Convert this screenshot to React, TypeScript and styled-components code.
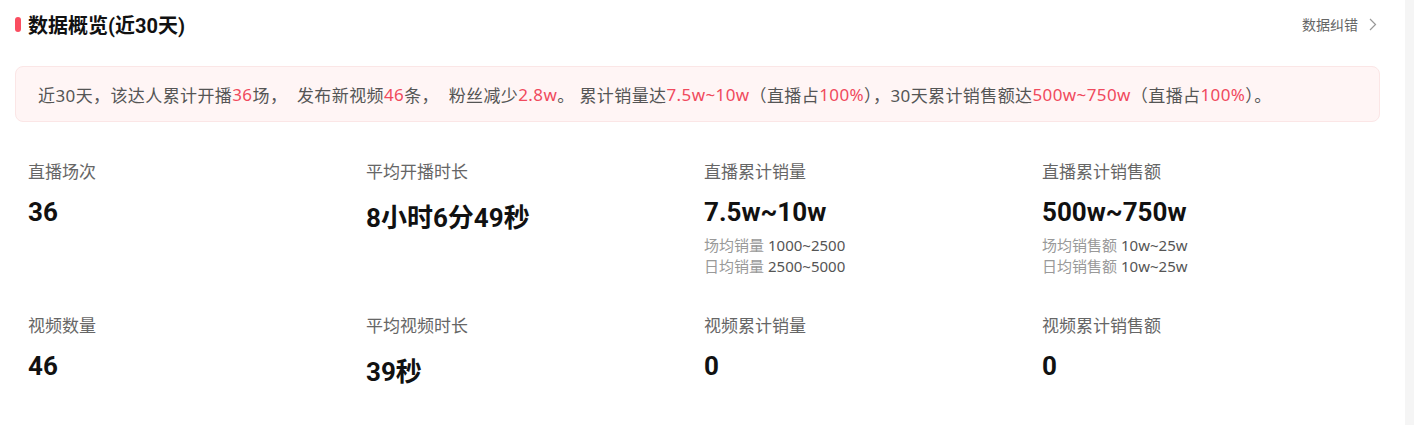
import styled, { createGlobalStyle } from "styled-components";

const GlobalStyle = createGlobalStyle`
    body {
        margin: 0;
        background: #ffffff;
        font-family: "Noto Sans", "Noto Sans CJK SC", sans-serif;
    }
`;

const StyledPage = styled.div`
    display: flex;
    width: 100%;
    height: 425px;
    overflow: hidden;
`;
const StyledMain = styled.div`
    flex: 1;
    padding: 0 25px 0 15px;
    background: #ffffff;
`;
const StyledSideStrip = styled.div`
    width: 11px;
    background: #f5f5f5;
`;
const StyledHeader = styled.div`
    display: flex;
    align-items: center;
    justify-content: space-between;
    height: 48px;
`;
const StyledTitle = styled.div`
    display: flex;
    align-items: center;
    gap: 7px;
    font-family: Roboto, "Noto Sans CJK SC", sans-serif;
    font-size: 20px;
    font-weight: 700;
    color: #111111;
    &:before {
        content: "";
        width: 6px;
        height: 15px;
        border-radius: 3px;
        background-color: #fa4d60;
    }
`;
const StyledCorrect = styled.div`
    display: flex;
    align-items: center;
    gap: 11px;
    margin-right: 3px;
    font-size: 14px;
    color: #666666;
    cursor: pointer;
`;
const StyledBanner = styled.div`
    margin-top: 18px;
    height: 56px;
    display: flex;
    align-items: center;
    padding: 0 22px;
    box-sizing: border-box;
    border: 1px solid #fbe6e6;
    border-radius: 8px;
    background-color: #fff5f5;
    font-size: 17px;
    letter-spacing: 0.4px;
    color: #555555;
    white-space: pre;
`;
const StyledHighlight = styled.span`
    color: #f04a5d;
`;
const StyledGrid = styled.div`
    display: grid;
    grid-template-columns: repeat(4, 338px);
    row-gap: 39px;
    margin-top: 40px;
    padding-left: 13px;
`;
const StyledCell = styled.div`
    display: flex;
    flex-direction: column;
`;
const StyledLabel = styled.div`
    font-size: 17px;
    line-height: 20px;
    color: #666666;
`;
const StyledValue = styled.div`
    margin-top: 15px;
    font-family: Roboto, "Noto Sans CJK SC", sans-serif;
    font-size: 26px;
    font-weight: 700;
    color: #111111;
`;
const StyledSubList = styled.div`
    margin-top: 8px;
    display: flex;
    flex-direction: column;
`;
const StyledSubLine = styled.div`
    font-size: 15px;
    line-height: 21px;
    color: #555555;
    & span {
        color: #999999;
        margin-right: 4px;
    }
`;

type Metric = {
    label: string;
    value: string;
    subs?: [string, string][];
};

const metrics: Metric[] = [
    { label: "直播场次", value: "36" },
    { label: "平均开播时长", value: "8小时6分49秒" },
    {
        label: "直播累计销量",
        value: "7.5w~10w",
        subs: [
            ["场均销量", "1000~2500"],
            ["日均销量", "2500~5000"],
        ],
    },
    {
        label: "直播累计销售额",
        value: "500w~750w",
        subs: [
            ["场均销售额", "10w~25w"],
            ["日均销售额", "10w~25w"],
        ],
    },
    { label: "视频数量", value: "46" },
    { label: "平均视频时长", value: "39秒" },
    { label: "视频累计销量", value: "0" },
    { label: "视频累计销售额", value: "0" },
];

const App = () => {
    return (
        <StyledPage>
            <GlobalStyle />
            <StyledMain>
                <StyledHeader>
                    <StyledTitle>数据概览(近30天)</StyledTitle>
                    <StyledCorrect>
                        数据纠错
                        <svg width="8" height="13" viewBox="0 0 8 13">
                            <path d="M1 1l5.5 5.5L1 12" fill="none" stroke="#999" strokeWidth="1.2" />
                        </svg>
                    </StyledCorrect>
                </StyledHeader>
                <StyledBanner>
                    {"近30天，该达人累计开播"}
                    <StyledHighlight>36</StyledHighlight>
                    {"场，  发布新视频"}
                    <StyledHighlight>46</StyledHighlight>
                    {"条，  粉丝减少"}
                    <StyledHighlight>2.8w</StyledHighlight>
                    {"。 累计销量达"}
                    <StyledHighlight>7.5w~10w</StyledHighlight>
                    {"（直播占"}
                    <StyledHighlight>100%</StyledHighlight>
                    {"），30天累计销售额达"}
                    <StyledHighlight>500w~750w</StyledHighlight>
                    {"（直播占"}
                    <StyledHighlight>100%</StyledHighlight>
                    {"）。"}
                </StyledBanner>
                <StyledGrid>
                    {metrics.map((m) => (
                        <StyledCell key={m.label}>
                            <StyledLabel>{m.label}</StyledLabel>
                            <StyledValue>{m.value}</StyledValue>
                            {m.subs && (
                                <StyledSubList>
                                    {m.subs.map(([k, v]) => (
                                        <StyledSubLine key={k}>
                                            <span>{k}</span>
                                            {v}
                                        </StyledSubLine>
                                    ))}
                                </StyledSubList>
                            )}
                        </StyledCell>
                    ))}
                </StyledGrid>
            </StyledMain>
            <StyledSideStrip />
        </StyledPage>
    );
};

export default App;
